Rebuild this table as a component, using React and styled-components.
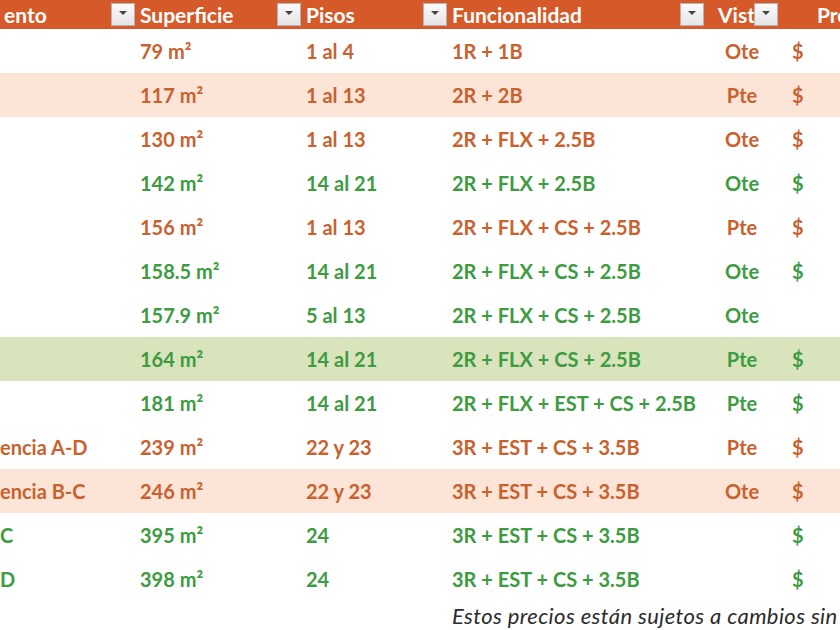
import React from "react";
import styled, { createGlobalStyle, css } from "styled-components";

const ORANGE = "#c9612f";
const GREEN = "#3d9b41";

const rows = [
  { a: "", sup: "79 m²", pisos: "1 al 4", func: "1R + 1B", vista: "Ote", price: "$", color: "orange" },
  { a: "", sup: "117 m²", pisos: "1 al 13", func: "2R + 2B", vista: "Pte", price: "$", color: "orange", fill: "pink" },
  { a: "", sup: "130 m²", pisos: "1 al 13", func: "2R + FLX + 2.5B", vista: "Ote", price: "$", color: "orange" },
  { a: "", sup: "142 m²", pisos: "14 al 21", func: "2R + FLX + 2.5B", vista: "Ote", price: "$", color: "green" },
  { a: "", sup: "156 m²", pisos: "1 al 13", func: "2R + FLX + CS + 2.5B", vista: "Pte", price: "$", color: "orange" },
  { a: "", sup: "158.5 m²", pisos: "14 al 21", func: "2R + FLX + CS + 2.5B", vista: "Ote", price: "$", color: "green" },
  { a: "", sup: "157.9 m²", pisos: "5 al 13", func: "2R + FLX + CS + 2.5B", vista: "Ote", price: "", color: "green" },
  { a: "", sup: "164 m²", pisos: "14 al 21", func: "2R + FLX + CS + 2.5B", vista: "Pte", price: "$", color: "green", fill: "green" },
  { a: "", sup: "181 m²", pisos: "14 al 21", func: "2R + FLX + EST + CS + 2.5B", vista: "Pte", price: "$", color: "green" },
  { a: "encia A-D", sup: "239 m²", pisos: "22 y 23", func: "3R + EST + CS + 3.5B", vista: "Pte", price: "$", color: "orange" },
  { a: "encia B-C", sup: "246 m²", pisos: "22 y 23", func: "3R + EST + CS + 3.5B", vista: "Ote", price: "$", color: "orange", fill: "pink" },
  { a: "C", sup: "395 m²", pisos: "24", func: "3R + EST + CS + 3.5B", vista: "", price: "$", color: "green" },
  { a: "D", sup: "398 m²", pisos: "24", func: "3R + EST + CS + 3.5B", vista: "", price: "$", color: "green" },
];

const GlobalStyle = createGlobalStyle`
  html, body {
    margin: 0;
    padding: 0;
    background: #fff;
    overflow: hidden;
  }
  body {
    font-family: Lato, "Open Sans", sans-serif;
  }
`;

const cols = css`
  display: grid;
  grid-template-columns: 136px 166px 146px 257px 74px 1fr;
`;

const Sheet = styled.div`
  width: 840px;
  height: 630px;
  overflow: hidden;
  white-space: nowrap;
`;

const HeaderRow = styled.div`
  ${cols};
  height: 29px;
  background: #d65a29;
  color: #fff;
  font-weight: 700;
  font-size: 21px;
`;

const HeadCell = styled.div`
  position: relative;
  display: flex;
  align-items: center;
  padding-left: ${(p) => p.$pad || 4}px;
  padding-bottom: 1px;
  overflow: hidden;
`;

const Filter = styled.span`
  position: absolute;
  right: 1px;
  top: 3px;
  width: 24px;
  height: 23px;
  box-sizing: border-box;
  border: 1px solid #b4b4b4;
  background: linear-gradient(#fbfbfb, #e4e4e4);
  display: flex;
  align-items: center;
  justify-content: center;
  &::after {
    content: "";
    border-left: 4px solid transparent;
    border-right: 4px solid transparent;
    border-top: 4px solid #444;
    margin-top: -3px;
  }
`;

const fills = { pink: "#fce4d6", green: "#d9e4bd" };

const Row = styled.div`
  ${cols};
  height: 44px;
  align-items: center;
  font-size: 20px;
  font-weight: 700;
  background: ${(p) => fills[p.$fill] || "#fff"};
  color: ${(p) => (p.$color === "green" ? GREEN : ORANGE)};
`;

const Cell = styled.div`
  padding-left: ${(p) => (p.$pad !== undefined ? p.$pad : 4)}px;
  text-align: ${(p) => p.$align || "left"};
  overflow: hidden;
`;

const Footer = styled.div`
  ${cols};
  padding-top: 1px;
  font-size: 22px;
  font-style: italic;
  letter-spacing: 0.4px;
  color: #2b2b2b;
`;

const Note = styled.div`
  grid-column: 4 / span 3;
  padding-left: 4px;
  overflow: visible;
`;

export default function App() {
  return (
    <Sheet>
      <GlobalStyle />
      <HeaderRow>
        <HeadCell $pad={0}>ento<Filter /></HeadCell>
        <HeadCell>Superficie<Filter /></HeadCell>
        <HeadCell>Pisos<Filter /></HeadCell>
        <HeadCell>Funcionalidad<Filter /></HeadCell>
        <HeadCell $pad={13}>Vista<Filter /></HeadCell>
        <HeadCell $pad={38}>Precio</HeadCell>
      </HeaderRow>
      {rows.map((r, i) => (
        <Row key={i} $fill={r.fill} $color={r.color}>
          <Cell $pad={0}>{r.a}</Cell>
          <Cell>{r.sup}</Cell>
          <Cell>{r.pisos}</Cell>
          <Cell>{r.func}</Cell>
          <Cell $pad={0} $align="center">{r.vista}</Cell>
          <Cell $pad={13}>{r.price}</Cell>
        </Row>
      ))}
      <Footer>
        <Note>Estos precios están sujetos a cambios sin previo aviso.</Note>
      </Footer>
    </Sheet>
  );
}
